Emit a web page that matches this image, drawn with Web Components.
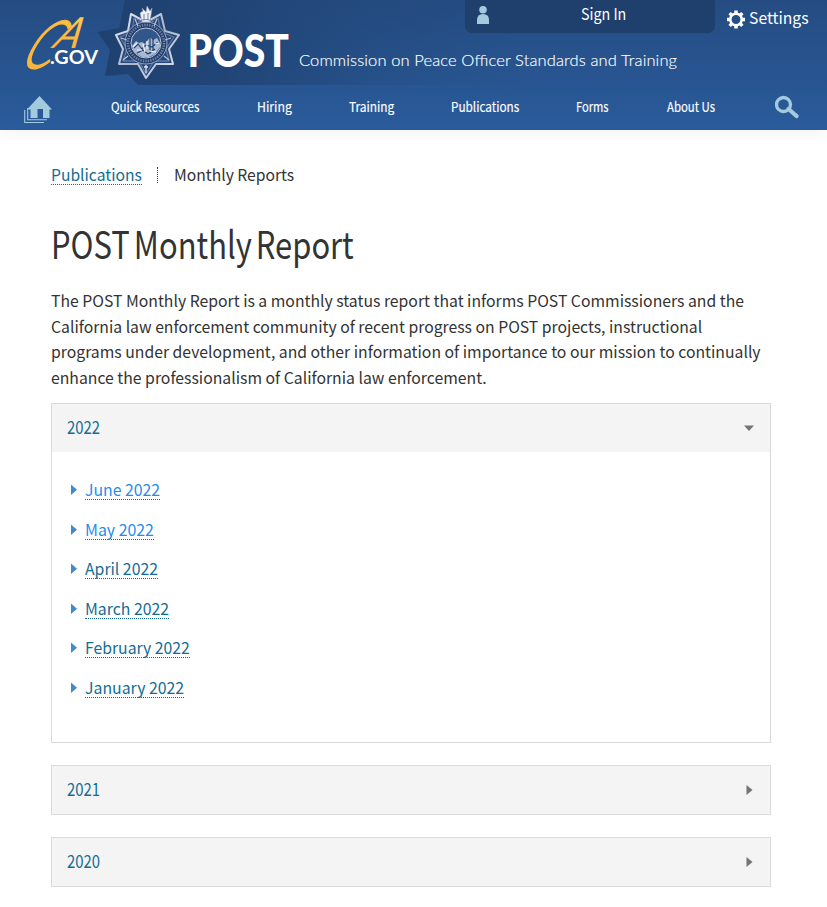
<!DOCTYPE html>
<html lang="en">
<head>
<meta charset="utf-8">
<title>POST Monthly Report</title>
<style>
html,body{margin:0;background:#fff}
body{font:16px/25.7px "Noto Sans CJK SC","Noto Sans",sans-serif;color:#333;width:827px;height:907px;overflow:hidden}
</style>
</head>
<body>
<post-page></post-page>
<script>
/* One line of text condensed horizontally to a given advance width. */
customElements.define('fit-text', class extends HTMLElement {
  connectedCallback() {
    const root = this.attachShadow({mode: 'open'});
    root.innerHTML = `<style>
      :host{display:block;white-space:nowrap;width:${this.getAttribute('w')}px}
      span{display:inline-block;transform-origin:0 50%}
    </style><span><slot></slot></span>`;
    const s = root.querySelector('span');
    s.style.transform = `scaleX(${this.getAttribute('w') / s.offsetWidth})`;
  }
});

customElements.define('post-brand', class extends HTMLElement {
  connectedCallback() {
    this.attachShadow({mode: 'open'}).innerHTML = `<style>
      :host{display:block;width:827px;height:85px}
      svg{display:block}
    </style>
    <svg width="827" height="85" viewBox="0 0 827 85">
      <defs>
        <linearGradient id="shade" gradientUnits="userSpaceOnUse" x1="98" x2="520" y1="0" y2="0">
          <stop offset="0" stop-color="#1f4170"/><stop offset=".3" stop-color="#204373" stop-opacity=".9"/>
          <stop offset=".65" stop-color="#214779" stop-opacity=".35"/><stop offset="1" stop-color="#214779" stop-opacity="0"/>
        </linearGradient>
        <linearGradient id="gold" x1="0" x2="0" y1="0" y2="1"><stop offset="0" stop-color="#fdd44c"/><stop offset="1" stop-color="#fbaa34"/></linearGradient>
        <linearGradient id="metal" x1="0" x2="1" y1="0" y2="1"><stop offset="0" stop-color="#e8ebf3"/><stop offset=".5" stop-color="#aab5cc"/><stop offset="1" stop-color="#e6e9f2"/></linearGradient>
      </defs>
      <path d="M125 0H540V85H138L128 74L105 76L110 50L97.500 32L119 28Z" fill="url(#shade)"/>
      <g fill="url(#gold)" font-family="Lato,sans-serif">
        <text transform="translate(17.500 68) skewX(-32) scale(.66 1)" font-size="66" font-weight="300" stroke="#fcb63b" stroke-width="1.800">C</text>
        <text transform="translate(50 48) skewX(-32) scale(.86 1)" font-size="43" font-weight="400">A</text>
      </g>
      <text x="50" y="64.300" textLength="48" lengthAdjust="spacingAndGlyphs" fill="#fff" font-family="Lato,sans-serif" font-weight="700" font-size="19">.GOV</text>
      <g stroke-linejoin="round">
        <path d="M146 78L138 64L119 64L123 49L116 35L128 31L131 14L142 20H150L161 14L165 31L179 35L169 49L173 64L156 64Z" fill="#25477a" stroke="url(#metal)" stroke-width="2"/>
        <path d="M146 74L139 61L123 61L127 49L120 37L132 32L134 18L146 23L158 18L161 32L174 37L166 49L169 61L154 61Z" fill="none" stroke="#6078a2" stroke-width="1.300"/>
        <circle cx="146" cy="43" r="21" fill="#243f6d" stroke="#94a4c0"/>
        <circle cx="146" cy="43" r="18" fill="none" stroke="#7386aa" stroke-width="2.500" stroke-dasharray="1.300 1.200"/>
        <circle cx="146" cy="43" r="15" fill="#31568a" stroke="#bac5d9"/>
        <path d="M132 46L136 41L139 43L142 42L145 44L150 37L153 40L157 38L160 43V47L155 54L149 57H142L134 52Z" fill="#a9b8cf"/>
        <path d="M134 48L138 44L142 49L146 45L152 47L158 42M137 53L143 50L148 54L155 49M150 36V54M153 38V52" fill="none" stroke="#234271" stroke-width="1.200"/>
        <path d="M133 47L137 43M143 44L145 52M147 41V49M155 44L159 43M137 50H142M149 51L156 52" fill="none" stroke="#f3f5fa" stroke-width="1.200"/>
        <path d="M142 22L140 13L143 11L142 8L146 12L147 6L150 11L152 8L151 15L150 22Z" fill="#edf0f6" stroke="#8b9ab7" stroke-width=".6"/>
        <path d="M138 22Q146 17 154 22M144 14V20M148 13V20" fill="none" stroke="#7384a5"/>
        <path d="M146 65V73M144 67H148" stroke="#e1e6f0" stroke-width="1.300"/>
        <path d="M121 38L127 40M171 38L165 40M123 60L128 56M169 60L164 56M135 19L138 26M157 19L154 26" stroke="#b6c1d5" stroke-width="1.300"/>
      </g>
      <text x="187.500" y="66.500" textLength="101.500" lengthAdjust="spacingAndGlyphs" fill="#fff" font-family="Lato,sans-serif" font-weight="900" font-size="45">POST</text>
      <text x="299" y="66.300" textLength="378" lengthAdjust="spacing" fill="#fff" font-family="Lato,sans-serif" font-weight="300" font-size="16.500" stroke="#fff" stroke-width=".15">Commission on Peace Officer Standards and Training</text>
    </svg>`;
  }
});

customElements.define('post-nav', class extends HTMLElement {
  connectedCallback() {
    this.attachShadow({mode: 'open'}).innerHTML = `<style>
      :host{display:flex;height:45px;padding:0 28px 0 24px;justify-content:space-between;color:#fff;font-size:13.5px;line-height:43px;font-weight:400;-webkit-text-stroke:.15px #fff}
      nav{display:flex;gap:57.4px;margin-left:-.8px}
      svg{display:block}
    </style>
    <svg width="28" height="45" viewBox="24 85 28 45"><path d="M27 109.500L39.500 96L52 109.500H49.500V118H43V109H37.500V118H30.500V109.500Z" fill="#a3cadd"/><path d="M24.700 110V122.500H44M27.700 108V119.800H47" fill="none" stroke="#a3cadd" stroke-width="1.100"/></svg>
    <nav><fit-text w="88">Quick Resources</fit-text><fit-text w="34.500">Hiring</fit-text><fit-text w="45">Training</fit-text><fit-text w="68">Publications</fit-text><fit-text w="33">Forms</fit-text><fit-text w="48">About Us</fit-text></nav>
    <svg width="24" height="45" viewBox="775 85 24 45"><circle cx="783.500" cy="104.500" r="7" fill="none" stroke="#a3cadd" stroke-width="3.300"/><path d="M788.500 109L796.500 116" stroke="#a3cadd" stroke-width="4.200" stroke-linecap="round"/></svg>`;
  }
});

customElements.define('post-header', class extends HTMLElement {
  connectedCallback() {
    this.attachShadow({mode: 'open'}).innerHTML = `<style>
      :host{display:block;position:relative;height:130px;background:linear-gradient(#254c82,#2a5b9b);box-shadow:0 0 16px rgba(0,0,0,.07)}
      .sign{position:absolute;left:465px;top:0;width:250px;height:33px;box-sizing:border-box;background:#1f3f6d;border-radius:0 0 7px 7px;color:#fff;display:flex;padding-left:12px;line-height:26px;font-size:16.5px}
      .sign fit-text{margin-left:92px}
      .set{position:absolute;left:727px;top:0;display:flex;gap:4px;color:#fff;line-height:34px;font-size:16px}
      svg{display:block}
    </style>
    <post-brand></post-brand>
    <post-nav></post-nav>
    <div class="sign"><svg width="12" height="33" viewBox="0 0 12 33" fill="#a3cadd"><circle cx="6" cy="9.700" r="3.800"/><path d="M0 24V20Q0 14 6 14T12 20V24Z"/></svg><fit-text w="45">Sign In</fit-text></div>
    <div class="set"><svg width="18" height="36" viewBox="-9 -19.500 18 36"><circle r="5.700" fill="none" stroke="#fff" stroke-width="2.500"/><g stroke="#fff" stroke-width="3.500"><path d="M0-9V-6M0 9V6M9 0H6M-9 0H-6"/><path d="M0-9V-6M0 9V6M9 0H6M-9 0H-6" transform="rotate(45)"/></g></svg><fit-text w="60">Settings</fit-text></div>`;
  }
});

customElements.define('year-panel', class extends HTMLElement {
  connectedCallback() {
    const open = this.hasAttribute('open');
    this.attachShadow({mode: 'open'}).innerHTML = `<style>
      :host{display:block;box-sizing:border-box;width:720px;height:${open ? 340 : 50}px;border:1px solid #dadada}
      header{height:48px;background:#f4f4f4;display:flex;justify-content:space-between;align-items:center;padding:0 15px;color:#136c94;font-size:18px}
      header fit-text{padding-bottom:1px}
      .body{padding:26.4px 18.5px}
      svg{display:block}
    </style>
    <header><fit-text w="33">${this.getAttribute('year')}</fit-text>
    <svg width="12" height="12" viewBox="0 0 12 12" fill="#727574"><path d="${open ? 'M1 3.500H11L6 9Z' : 'M3.500 1V11L9.500 6Z'}"/></svg></header>
    <div class="body"><slot></slot></div>`;
  }
});

customElements.define('report-link', class extends HTMLElement {
  connectedCallback() {
    this.attachShadow({mode: 'open'}).innerHTML = `<style>
      :host{display:flex;height:39.55px;color:#136c94}
      :host([unread]){color:#1f8ceb}
      svg{display:block;margin-right:8.5px}
      a{line-height:22px;height:21px;border-bottom:1px dotted #136c94}
    </style><svg width="6" height="24" viewBox="0 0 6 24"><path d="M0 6.500L6 11.700L0 17Z" fill="#428bca"/></svg><a><fit-text w="${this.getAttribute('w')}"><slot></slot></fit-text></a>`;
  }
});

customElements.define('post-page', class extends HTMLElement {
  connectedCallback() {
    this.attachShadow({mode: 'open'}).innerHTML = `<style>
      :host{display:block}
      main{padding:0 51px}
      .crumbs{display:flex;margin-top:33px;height:24px;line-height:22px;font-size:16px}
      .crumbs a{color:#136c94;border-bottom:1px dotted #136c94;height:21px}
      .crumbs i{border-left:1px dotted #333;height:16px;margin:4px 15.5px 0 15px}
      h1{font-size:37.5px;font-weight:400;line-height:50px;margin:31px 0 20px -.5px;color:#333;word-spacing:-3.5px}
      p{margin:0 0 12px;font-size:16px}
      .more{margin-top:22px}
    </style>
    <post-header></post-header>
    <main>
      <div class="crumbs"><a><fit-text w="91">Publications</fit-text></a><i></i><fit-text w="120.500">Monthly Reports</fit-text></div>
      <h1><fit-text w="302.500">POST Monthly Report</fit-text></h1>
      <p><fit-text w="692.500">The POST Monthly Report is a monthly status report that informs POST Commissioners and the</fit-text>
      <fit-text w="651.500">California law enforcement community of recent progress on POST projects, instructional</fit-text>
      <fit-text w="709.500">programs under development, and other information of importance to our mission to continually</fit-text>
      <fit-text w="435.500">enhance the professionalism of California law enforcement.</fit-text></p>
      <year-panel year="2022" open>
        <report-link unread w="75">June 2022</report-link>
        <report-link unread w="68.500">May 2022</report-link>
        <report-link w="73">April 2022</report-link>
        <report-link w="84">March 2022</report-link>
        <report-link w="104.500">February 2022</report-link>
        <report-link w="99">January 2022</report-link>
      </year-panel>
      <year-panel class="more" year="2021"></year-panel>
      <year-panel class="more" year="2020"></year-panel>
    </main>`;
  }
});
</script>
</body>
</html>
